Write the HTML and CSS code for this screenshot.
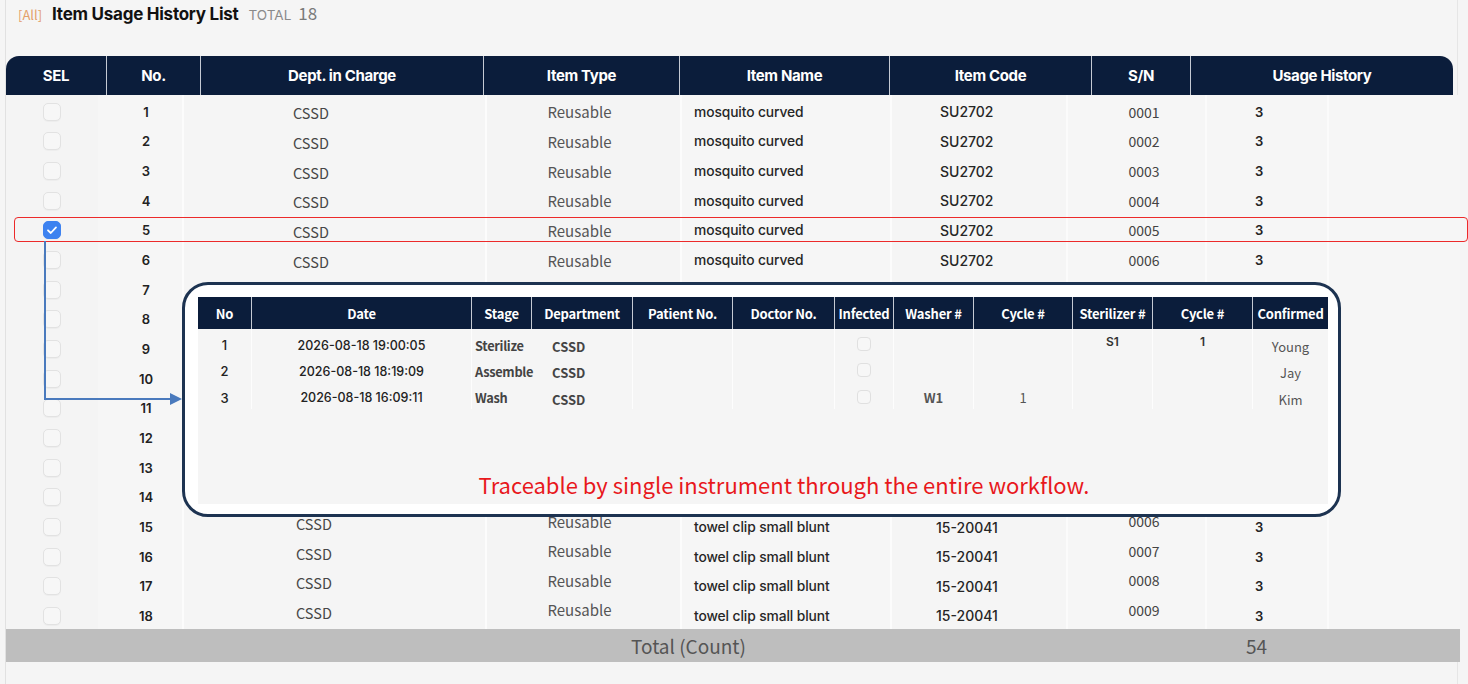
FILE: index.html
```html
<!DOCTYPE html>
<html lang="en">
<head>
<meta charset="utf-8">
<title>Item Usage History List</title>
<link rel="stylesheet" href="styles.css">
</head>
<body>
<div class="page">
  <div class="panel">
    <div class="title-bar">
      <span class="tag">[All]</span>
      <h1 class="title">Item Usage History List</h1>
      <span class="total-label">TOTAL</span>
      <span class="total-num">18</span>
    </div>
    <div class="grid">
      <div class="thead">
        <div class="th">SEL</div>
        <div class="th">No.</div>
        <div class="th">Dept. in Charge</div>
        <div class="th">Item Type</div>
        <div class="th">Item Name</div>
        <div class="th">Item Code</div>
        <div class="th">S/N</div>
        <div class="th">Usage History</div>
      </div>
      <div class="tbody">
        <div class="row"><span class="c-sel"><i class="cb"></i></span><span class="c-no">1</span><span class="c-dept">CSSD</span><span class="c-type">Reusable</span><span class="c-name">mosquito curved</span><span class="c-code">SU2702</span><span class="c-sn">0001</span><span class="c-use">3</span><span class="c-end"></span></div>
        <div class="row"><span class="c-sel"><i class="cb"></i></span><span class="c-no">2</span><span class="c-dept">CSSD</span><span class="c-type">Reusable</span><span class="c-name">mosquito curved</span><span class="c-code">SU2702</span><span class="c-sn">0002</span><span class="c-use">3</span><span class="c-end"></span></div>
        <div class="row"><span class="c-sel"><i class="cb"></i></span><span class="c-no">3</span><span class="c-dept">CSSD</span><span class="c-type">Reusable</span><span class="c-name">mosquito curved</span><span class="c-code">SU2702</span><span class="c-sn">0003</span><span class="c-use">3</span><span class="c-end"></span></div>
        <div class="row"><span class="c-sel"><i class="cb"></i></span><span class="c-no">4</span><span class="c-dept">CSSD</span><span class="c-type">Reusable</span><span class="c-name">mosquito curved</span><span class="c-code">SU2702</span><span class="c-sn">0004</span><span class="c-use">3</span><span class="c-end"></span></div>
        <div class="row"><span class="c-sel"><i class="cb checked"><svg viewBox="0 0 18 18" width="18" height="18"><path d="M5 9.3 L7.8 12 L13 6.4" fill="none" stroke="#fff" stroke-width="1.8" stroke-linecap="round" stroke-linejoin="round"/></svg></i></span><span class="c-no">5</span><span class="c-dept">CSSD</span><span class="c-type">Reusable</span><span class="c-name">mosquito curved</span><span class="c-code">SU2702</span><span class="c-sn">0005</span><span class="c-use">3</span><span class="c-end"></span></div>
        <div class="row"><span class="c-sel"><i class="cb"></i></span><span class="c-no">6</span><span class="c-dept">CSSD</span><span class="c-type">Reusable</span><span class="c-name">mosquito curved</span><span class="c-code">SU2702</span><span class="c-sn">0006</span><span class="c-use">3</span><span class="c-end"></span></div>
        <div class="row"><span class="c-sel"><i class="cb"></i></span><span class="c-no">7</span><span class="c-dept"></span><span class="c-type"></span><span class="c-name"></span><span class="c-code"></span><span class="c-sn"></span><span class="c-use"></span><span class="c-end"></span></div>
        <div class="row"><span class="c-sel"><i class="cb"></i></span><span class="c-no">8</span><span class="c-dept"></span><span class="c-type"></span><span class="c-name"></span><span class="c-code"></span><span class="c-sn"></span><span class="c-use"></span><span class="c-end"></span></div>
        <div class="row"><span class="c-sel"><i class="cb"></i></span><span class="c-no">9</span><span class="c-dept"></span><span class="c-type"></span><span class="c-name"></span><span class="c-code"></span><span class="c-sn"></span><span class="c-use"></span><span class="c-end"></span></div>
        <div class="row"><span class="c-sel"><i class="cb"></i></span><span class="c-no">10</span><span class="c-dept"></span><span class="c-type"></span><span class="c-name"></span><span class="c-code"></span><span class="c-sn"></span><span class="c-use"></span><span class="c-end"></span></div>
        <div class="row"><span class="c-sel"><i class="cb"></i></span><span class="c-no">11</span><span class="c-dept"></span><span class="c-type"></span><span class="c-name"></span><span class="c-code"></span><span class="c-sn"></span><span class="c-use"></span><span class="c-end"></span></div>
        <div class="row"><span class="c-sel"><i class="cb"></i></span><span class="c-no">12</span><span class="c-dept"></span><span class="c-type"></span><span class="c-name"></span><span class="c-code"></span><span class="c-sn"></span><span class="c-use"></span><span class="c-end"></span></div>
        <div class="row"><span class="c-sel"><i class="cb"></i></span><span class="c-no">13</span><span class="c-dept"></span><span class="c-type"></span><span class="c-name"></span><span class="c-code"></span><span class="c-sn"></span><span class="c-use"></span><span class="c-end"></span></div>
        <div class="row"><span class="c-sel"><i class="cb"></i></span><span class="c-no">14</span><span class="c-dept"></span><span class="c-type"></span><span class="c-name"></span><span class="c-code"></span><span class="c-sn"></span><span class="c-use"></span><span class="c-end"></span></div>
        <div class="row lift"><span class="c-sel"><i class="cb"></i></span><span class="c-no">15</span><span class="c-dept">CSSD</span><span class="c-type">Reusable</span><span class="c-name">towel clip small blunt</span><span class="c-code">15-20041</span><span class="c-sn">0006</span><span class="c-use">3</span><span class="c-end"></span></div>
        <div class="row lift"><span class="c-sel"><i class="cb"></i></span><span class="c-no">16</span><span class="c-dept">CSSD</span><span class="c-type">Reusable</span><span class="c-name">towel clip small blunt</span><span class="c-code">15-20041</span><span class="c-sn">0007</span><span class="c-use">3</span><span class="c-end"></span></div>
        <div class="row lift"><span class="c-sel"><i class="cb"></i></span><span class="c-no">17</span><span class="c-dept">CSSD</span><span class="c-type">Reusable</span><span class="c-name">towel clip small blunt</span><span class="c-code">15-20041</span><span class="c-sn">0008</span><span class="c-use">3</span><span class="c-end"></span></div>
        <div class="row lift"><span class="c-sel"><i class="cb"></i></span><span class="c-no">18</span><span class="c-dept">CSSD</span><span class="c-type">Reusable</span><span class="c-name">towel clip small blunt</span><span class="c-code">15-20041</span><span class="c-sn">0009</span><span class="c-use">3</span><span class="c-end"></span></div>
      </div>
      <div class="tfoot">
        <span class="f-label">Total (Count)</span>
        <span class="f-value">54</span>
      </div>
    </div>
  </div>

  <div class="highlight"></div>

  <svg class="connector" width="150" height="172" viewBox="0 0 150 172">
    <path d="M5 3 V161 H131" fill="none" stroke="#4a7abd" stroke-width="2"/>
    <polygon points="130,155 142,161 130,167" fill="#4a7abd"/>
  </svg>

  <div class="popup">
    <div class="ptable">
      <div class="phead">
        <div class="pth">No</div>
        <div class="pth">Date</div>
        <div class="pth">Stage</div>
        <div class="pth">Department</div>
        <div class="pth">Patient No.</div>
        <div class="pth">Doctor No.</div>
        <div class="pth">Infected</div>
        <div class="pth">Washer #</div>
        <div class="pth">Cycle #</div>
        <div class="pth">Sterilizer #</div>
        <div class="pth">Cycle #</div>
        <div class="pth">Confirmed</div>
      </div>
      <div class="prow">
        <span class="p-no">1</span><span class="p-date">2026-08-18 19:00:05</span><span class="p-stage">Sterilize</span><span class="p-dept">CSSD</span><span></span><span></span><span class="p-inf"><i class="pcb"></i></span><span class="p-w"></span><span class="p-c"></span><span class="p-s">S1</span><span class="p-c2">1</span><span class="p-conf">Young</span>
      </div>
      <div class="prow">
        <span class="p-no">2</span><span class="p-date">2026-08-18 18:19:09</span><span class="p-stage">Assemble</span><span class="p-dept">CSSD</span><span></span><span></span><span class="p-inf"><i class="pcb"></i></span><span class="p-w"></span><span class="p-c"></span><span class="p-s"></span><span class="p-c2"></span><span class="p-conf">Jay</span>
      </div>
      <div class="prow">
        <span class="p-no">3</span><span class="p-date">2026-08-18 16:09:11</span><span class="p-stage">Wash</span><span class="p-dept">CSSD</span><span></span><span></span><span class="p-inf"><i class="pcb"></i></span><span class="p-w">W1</span><span class="p-c">1</span><span class="p-s"></span><span class="p-c2"></span><span class="p-conf">Kim</span>
      </div>
      <p class="pnote">Traceable by single instrument through the entire workflow.</p>
    </div>
  </div>
</div>
</body>
</html>
```

FILE: styles.css
```css
* { box-sizing: border-box; }
html, body { margin: 0; padding: 0; }
body {
  background: #f5f5f5;
  font-family: "Noto Sans CJK KR", "Noto Sans", sans-serif;
  color: #333;
}
.page {
  position: relative;
  width: 1468px;
  height: 684px;
  overflow: hidden;
  background: #f5f5f5;
}
.panel {
  margin-left: 5px;
  width: 1453px;
  height: 684px;
  border-left: 1px solid #e1e1e1;
  border-right: 1px solid #e6e6e6;
}
.title-bar {
  display: flex;
  align-items: baseline;
  height: 30px;
  padding: 0 0 0 12px;
}
.tag {
  font-family: "Noto Sans CJK KR", "Noto Sans", sans-serif;
  font-size: 13px;
  color: #e3a06a;
  margin-right: 10px;
}
.title {
  margin: 0;
  font-family: Inter, "Liberation Sans", sans-serif;
  font-weight: 700;
  font-size: 17px;
  line-height: 28px;
  letter-spacing: -0.25px;
  color: #111;
}
.total-label {
  margin-left: 10px;
  font-family: Inter, "Liberation Sans", sans-serif;
  font-size: 13.5px;
  color: #8a8a8a;
}
.total-num {
  margin-left: 7px;
  font-size: 17px;
  color: #7a7a7a;
}
.grid {
  margin-top: 26px;
  width: 1454px;
}
.thead {
  display: grid;
  grid-template-columns: 100px 94px 283px 196px 210px 202px 99px 263px;
  width: 1447px;
  height: 39px;
  background: #0b1d3b;
  border-radius: 13px 13px 0 0;
  overflow: hidden;
}
.th {
  display: flex;
  align-items: center;
  justify-content: center;
  color: #fff;
  font-family: Inter, "Liberation Sans", sans-serif;
  font-weight: 700;
  font-size: 15px;
  letter-spacing: -0.35px;
  border-left: 1px solid #c5cad3;
}
.th:first-child { border-left: 0; }
.tbody {
  height: 534px;
  display: flex;
  flex-direction: column;
}
.row {
  flex: none;
  height: 29.667px;
  display: grid;
  grid-template-columns: 92px 84px 303px 195px 210px 176px 139px 122px 1fr;
}
.row > span {
  display: flex;
  align-items: center;
  padding-top: 4px;
  white-space: nowrap;
}
.c-sel { justify-content: center; background: #f4f4f4; padding-top: 4px !important; }
.c-no {
  padding-left: 12px;
  justify-content: center;
  font-family: Inter, "Liberation Sans", sans-serif;
  font-weight: 600;
  font-size: 13px;
  color: #222;
  background: #f6f6f6;
}
.c-dept {
  padding-left: 109px;
  padding-top: 6px !important;
  font-size: 14.5px;
  color: #474747;
  border-left: 2px solid #fcfcfc;
  background: #f5f5f5;
}
.c-type {
  justify-content: center;
  padding-right: 8px;
  font-size: 15px;
  color: #555;
  border-left: 2px solid #fcfcfc;
  background: #f4f4f4;
}
.c-name {
  padding-left: 12px;
  font-family: Inter, "Liberation Sans", sans-serif;
  font-weight: 500;
  font-size: 13.8px;
  letter-spacing: -0.1px;
  color: #262626;
  border-left: 2px solid #fcfcfc;
  background: #f6f6f6;
}
.c-code {
  padding-left: 48px;
  font-family: Inter, "Liberation Sans", sans-serif;
  font-weight: 500;
  font-size: 14px;
  color: #262626;
  border-left: 2px solid #fcfcfc;
  background: #f5f5f5;
}
.c-sn {
  justify-content: center;
  padding-left: 15px;
  font-size: 14px;
  color: #444;
  border-left: 2px solid #fbfbfb;
  background: #f6f6f6;
}
.c-use {
  padding-left: 48px;
  font-family: Inter, "Liberation Sans", sans-serif;
  font-weight: 600;
  font-size: 13px;
  color: #222;
  border-left: 2px solid #fbfbfb;
  background: #f6f6f6;
}
.c-end {
  border-left: 2px solid #fbfbfb;
  background: #f6f6f6;
}
.lift .c-dept { padding-left: 112px; padding-top: 0 !important; padding-bottom: 3px; }
.lift .c-type { padding-top: 0; padding-bottom: 8px; }
.lift .c-sn { padding-top: 0; padding-bottom: 8px; }
.lift .c-code { padding-left: 44px; }

.cb {
  display: block;
  width: 18px;
  height: 18px;
  border-radius: 5px;
  background: #f7f7f7;
  border: 1px solid #e2e2e2;
  box-shadow: 0 1px 1px rgba(0,0,0,0.03);
}
.cb.checked {
  background: #3d82f0;
  border-color: #3d82f0;
  position: relative;
}
.cb.checked svg {
  position: absolute;
  left: -1px;
  top: -1px;
}
.tfoot {
  display: grid;
  grid-template-columns: 1240px 1fr;
  height: 33px;
  align-items: center;
  background: #bebebe;
  font-size: 19px;
  color: #555;
}
.f-label { padding-left: 625px; }

.highlight {
  position: absolute;
  left: 14px;
  top: 217px;
  width: 1454px;
  height: 25px;
  border: 1px solid #ec2a2a;
  border-radius: 4px;
}
.connector {
  position: absolute;
  left: 40px;
  top: 238px;
}
.popup {
  position: absolute;
  left: 182px;
  top: 282px;
  width: 1159px;
  height: 235px;
  border: 3px solid #1d3351;
  border-radius: 26px;
  background: #fff;
  padding: 12px 10px 10px 13px;
}
.ptable {
  height: 100%;
  display: flex;
  flex-direction: column;
  background: #f5f5f5;
}
.phead, .prow {
  display: grid;
  grid-template-columns: 53px 220px 60px 101px 100px 102px 59px 80px 99px 80px 100px 76px;
}
.phead {
  height: 32px;
  background: #0b1d3b;
}
.pth {
  display: flex;
  align-items: center;
  justify-content: center;
  color: #fff;
  font-weight: 700;
  font-size: 13px;
  letter-spacing: -0.2px;
  border-left: 1px solid #c5cad3;
  white-space: nowrap;
}
.pth:first-child { border-left: 0; }
.prow { height: 26.3px; }
.prow > span {
  display: flex;
  align-items: center;
  justify-content: center;
  padding-top: 5px;
  border-left: 1px solid #fdfdfd;
  font-size: 13px;
  color: #444;
  white-space: nowrap;
}
.prow > span:first-child { border-left: 0; }
.p-no {
  font-family: Inter, "Liberation Sans", sans-serif;
  font-weight: 500;
  color: #222 !important;
}
.p-date {
  font-family: Inter, "Liberation Sans", sans-serif;
  font-weight: 500;
  font-size: 12.5px !important;
  color: #222 !important;
}
.p-stage {
  justify-content: flex-start !important;
  padding-left: 3px;
  font-weight: 600;
  font-size: 12.8px !important;
  letter-spacing: -0.3px;
  color: #444;
}
.p-dept {
  justify-content: flex-start !important;
  padding-left: 21px;
  padding-top: 8px !important;
  font-weight: 700;
  border-left: 0 !important;
}
.p-w { font-weight: 700; color: #555 !important; }
.p-c { color: #555 !important; }
.p-s, .p-c2 {
  font-family: Inter, "Liberation Sans", sans-serif;
  font-weight: 600;
  font-size: 12px !important;
  color: #333 !important;
  align-items: flex-start !important;
  padding-top: 5px !important;
}
.p-conf { color: #555 !important; padding-top: 8px !important; }
.p-inf { padding-top: 3px !important; }
.pcb {
  display: block;
  width: 14px;
  height: 14px;
  border-radius: 4px;
  background: #f7f7f7;
  border: 1px solid #e0e0e0;
}
.pnote {
  margin: auto 0 0;
  padding: 0 0 6px 42px;
  text-align: center;
  color: #e8181c;
  font-size: 22px;
  line-height: 28px;
}
```
